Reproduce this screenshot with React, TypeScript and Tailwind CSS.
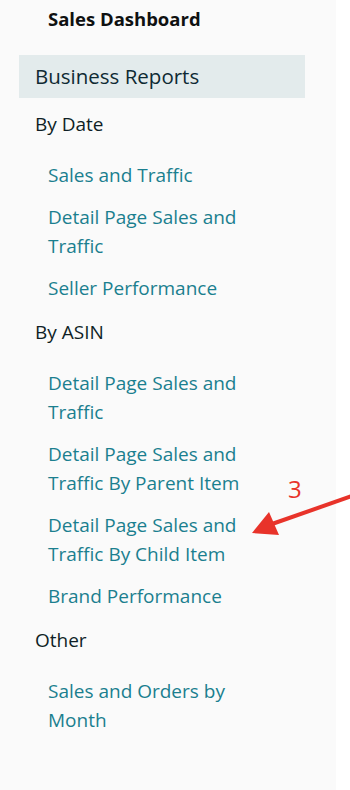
const dateLinks = [
  'Sales and Traffic',
  'Detail Page Sales and Traffic',
  'Seller Performance',
];

const asinLinks = [
  'Detail Page Sales and Traffic',
  'Detail Page Sales and Traffic By Parent Item',
  'Detail Page Sales and Traffic By Child Item',
  'Brand Performance',
];

const otherLinks = ['Sales and Orders by Month'];

function Group({ title, links }: { title: string; links: string[] }) {
  return (
    <div className="flex flex-col">
      <div className="pl-[35px] text-[19px] leading-[29px] text-[#0f1f26]">{title}</div>
      <ul className="mt-[22px] flex w-[270px] flex-col gap-[13px] pl-[48px]">
        {links.map((l, i) => (
          <li key={i} className="text-[19px] font-medium leading-[29px] text-[#1b7f8f]">
            {l}
          </li>
        ))}
      </ul>
    </div>
  );
}

export default function App() {
  return (
    <div className="flex h-[790px] w-[350px] bg-white" style={{ fontFamily: '"Open Sans", sans-serif' }}>
      <div className="relative flex w-[336px] flex-col bg-[#fafafa]">
        <div className="pl-[48px] pt-[4px] text-[18.5px] font-bold leading-[29px] text-[#0f1111]">Sales Dashboard</div>
        <div className="ml-[19px] mt-[22px] h-[43px] w-[286px] bg-[#e3ebec] pl-[16px] text-[20.5px] leading-[43px] text-[#0f2a33]">
          Business Reports
        </div>
        <div className="mt-[12px] flex flex-col gap-[15px]">
          <Group title="By Date" links={dateLinks} />
          <Group title="By ASIN" links={asinLinks} />
          <Group title="Other" links={otherLinks} />
        </div>
        <div className="absolute left-[288px] top-[474px] text-[24px] leading-[30px] text-[#e8332a]">3</div>
      </div>
      <svg className="absolute left-0 top-0" width="350" height="790" viewBox="0 0 350 790">
        <line x1="352" y1="496" x2="272" y2="524" stroke="#e8332a" strokeWidth="4" />
        <polygon points="252,533 269,512 279,535" fill="#e8332a" />
      </svg>
    </div>
  );
}
